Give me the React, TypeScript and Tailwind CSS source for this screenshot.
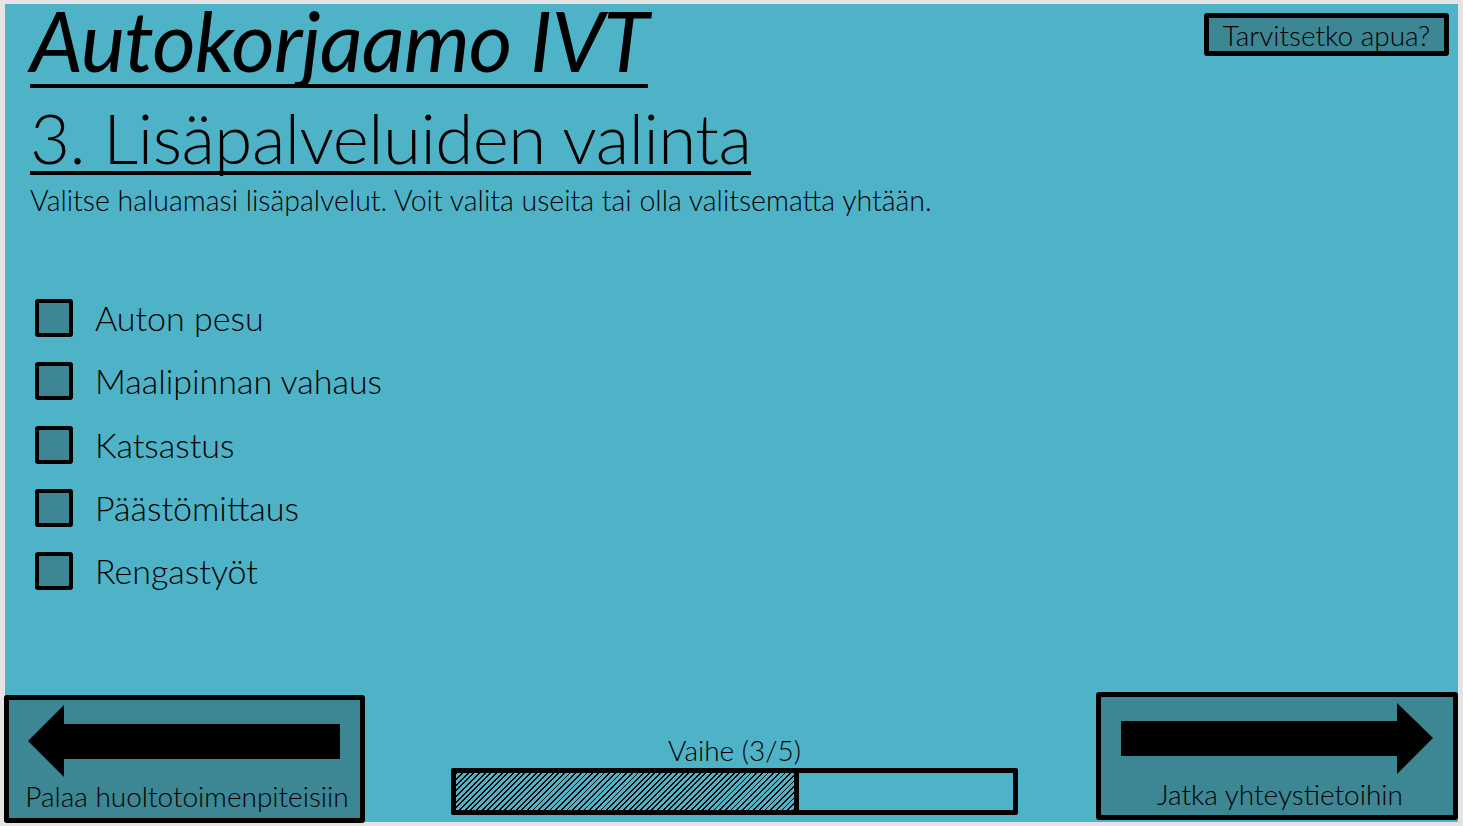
import React from "react";

const services = ["Auton pesu", "Maalipinnan vahaus", "Katsastus", "Päästömittaus", "Rengastyöt"];

function Arrow({ dir }: { dir: "left" | "right" }) {
  // shaft + triangular head, same shape mirrored
  const pts =
    dir === "left"
      ? "0,36 36,0 36,19 312,19 312,54 36,54 36,72"
      : "312,35 276,0 276,18 0,18 0,53 276,53 276,71";
  return (
    <svg width="312" height="72" viewBox="0 0 312 72" className="block">
      <polygon points={pts} fill="#000" />
    </svg>
  );
}

export default function App() {
  return (
    <div className="w-[1463px] h-[826px] bg-[#e4e4e4] pt-[4px] pb-[4px] pl-[5px] pr-[5px] font-['Lato','Open_Sans',sans-serif] text-black overflow-hidden">
      <div className="h-full bg-[#4fb3c8] flex flex-col">
        {/* header */}
        <div className="flex justify-between items-start pl-[25px] pr-[9px]">
          <h1 className="pb-[8px] border-b-[4px] border-black italic text-[84px] leading-[72px] tracking-[-1px]">
            Autokorjaamo IVT
          </h1>
          <button className="mt-[9px] w-[245px] h-[43px] border-[5px] border-black rounded-[3px] bg-[#3d8694] text-[28px] font-light leading-none">
            Tarvitsetko apua?
          </button>
        </div>

        <div className="pl-[25px] flex flex-col items-start">
          <h2 className="mt-[16px] border-b-[4px] border-black text-[69px] font-light leading-[67px] tracking-[-0.5px]">
            3. Lisäpalveluiden valinta
          </h2>
          <p className="mt-[10px] text-[28.5px] font-light leading-[30px]">
            Valitse haluamasi lisäpalvelut. Voit valita useita tai olla valitsematta yhtään.
          </p>
        </div>

        <ul className="mt-[84px] pl-[30px] flex flex-col gap-[25.3px]">
          {services.map((s) => (
            <li key={s} className="flex items-center h-[38px]">
              <span className="w-[38px] h-[38px] border-[4px] border-black rounded-[3px] bg-[#3d8694] shrink-0" />
              <span className="ml-[22px] text-[34px] font-light leading-none">{s}</span>
            </li>
          ))}
        </ul>

        {/* footer */}
        <div className="mt-auto flex items-end -ml-[1px] -mb-[1px]">
          <button className="w-[361px] h-[128px] border-[5px] border-black rounded-[3px] bg-[#3d8694] flex flex-col items-start pt-[5px] pl-[19px]">
            <Arrow dir="left" />
            <span className="self-center mt-[5px] ml-[-14px] text-[28px] font-light leading-none whitespace-nowrap">
              Palaa huoltotoimenpiteisiin
            </span>
          </button>

          <div className="flex-1 flex flex-col items-center pl-[8px] pb-[8px]">
            <span className="text-[28px] font-light leading-none">Vaihe (3/5)</span>
            <div className="mt-[4px] w-[567px] h-[47px] border-[5px] border-black rounded-[2px] flex">
              <div className="w-[343px] h-full border-r-[5px] border-black bg-[repeating-linear-gradient(135deg,#000_0px,#000_1.3px,transparent_1.3px,transparent_4px)]" />
              <div className="flex-1" />
            </div>
          </div>

          <button className="mb-[3px] w-[362px] h-[128px] border-[5px] border-black rounded-[3px] bg-[#3d8694] flex flex-col items-start pt-[6px] pl-[20px]">
            <Arrow dir="right" />
            <span className="self-center mt-[5px] ml-[-14px] text-[28px] font-light leading-none whitespace-nowrap">
              Jatka yhteystietoihin
            </span>
          </button>
        </div>
      </div>
    </div>
  );
}
